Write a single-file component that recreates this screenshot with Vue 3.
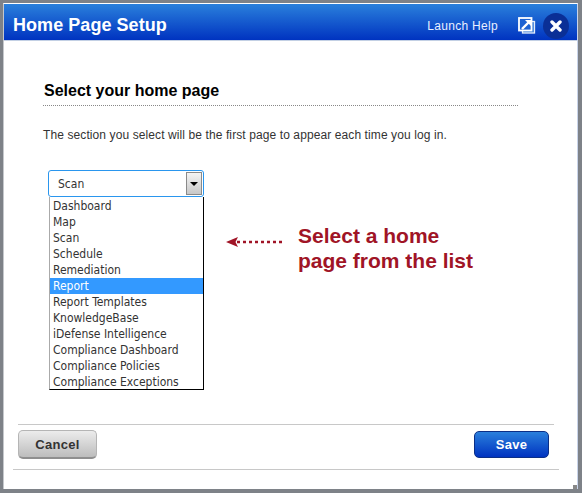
<template>
  <div class="window">
    <header class="title-bar">
      <h1 class="title">Home Page Setup</h1>
      <a class="help-link">Launch Help</a>
      <svg class="popout" width="18" height="17" viewBox="0 0 18 17">
        <rect x="4.500" y="4.500" width="12" height="11.500" fill="#3f7fd8" stroke="#e4edfb" stroke-width="1.300" />
        <rect x="1" y="1" width="12.500" height="12.500" fill="#1d62d2" stroke="#fff" stroke-width="1.800" />
        <path d="M4 12 L10.500 5.500" stroke="#fff" stroke-width="2.400" fill="none" />
        <path d="M7 3 H13.500 V9.500 Z" fill="#fff" />
      </svg>
      <button class="close-btn" type="button">
        <svg width="12" height="12" viewBox="0 0 12 12">
          <path d="M2 2 L10 10 M10 2 L2 10" stroke="#fff" stroke-width="3.400" stroke-linecap="round" />
        </svg>
      </button>
    </header>

    <main class="content">
      <h2 class="section-title">Select your home page</h2>
      <p class="intro">The section you select will be the first page to appear each time you log in.</p>

      <div class="picker-row">
        <div class="picker">
          <div class="select-box">
            <span class="select-value">Scan</span>
            <span class="select-arrow"><i class="caret"></i></span>
          </div>
          <ul class="options">
            <li v-for="page in pages" :key="page" :class="{ active: page === selected }">{{ page }}</li>
          </ul>
        </div>

        <div class="hint">
          <svg class="hint-arrow" width="59" height="12" viewBox="0 0 59 12">
            <path d="M0 6 L12 1 L9.500 6 L12 11 Z" fill="#a01426" />
            <path d="M11 6 H59" stroke="#a01426" stroke-width="2.500" stroke-dasharray="3 3" />
          </svg>
          <p class="hint-text">Select a home<br />page from the list</p>
        </div>
      </div>
    </main>

    <footer class="footer">
      <div class="actions">
        <button class="btn cancel" type="button">Cancel</button>
        <button class="btn save" type="button">Save</button>
      </div>
    </footer>
    <span class="grip"></span>
  </div>
</template>

<script setup>
const selected = 'Report'
const pages = [
  'Dashboard',
  'Map',
  'Scan',
  'Schedule',
  'Remediation',
  'Report',
  'Report Templates',
  'KnowledgeBase',
  'iDefense Intelligence',
  'Compliance Dashboard',
  'Compliance Policies',
  'Compliance Exceptions'
]
</script>

<style>
html,
body {
  margin: 0;
  background: #7e8288;
}
</style>

<style scoped>
.window {
  position: relative;
  box-sizing: border-box;
  width: 575px;
  height: 486px;
  margin: 3px 0 0 3px;
  background: #fff;
  border-top: 1px solid #fff;
  border-left: 1px solid #c5c8cc;
  border-right: 1px solid #c9d4ea;
  font-family: 'Liberation Sans', Arial, sans-serif;
  display: flex;
  flex-direction: column;
}

.title-bar {
  box-sizing: border-box;
  height: 37px;
  flex: none;
  display: flex;
  align-items: center;
  padding: 7px 8px 0 9px;
  background: linear-gradient(#2a80dc, #0033c0);
  border-bottom: 1px solid #c3d0e4;
  color: #fff;
}

.title {
  margin: 0;
  flex: 1;
  font-size: 18px;
  font-weight: bold;
  letter-spacing: 0.05px;
}

.help-link {
  font-size: 12px;
  letter-spacing: 0.3px;
  color: #e8f0ff;
  margin-right: 20px;
}

.popout {
  margin-right: 7px;
}

.close-btn {
  width: 26px;
  height: 26px;
  padding: 0;
  border: none;
  border-radius: 50%;
  background: #0a2f96;
  display: flex;
  align-items: center;
  justify-content: center;
}

.content {
  flex: 1;
  padding: 41px 0 0 39px;
}

.section-title {
  margin: 0 59px 0 0;
  padding-bottom: 5px;
  font-size: 16px;
  line-height: 18px;
  font-weight: bold;
  color: #000;
  border-bottom: 1px dotted #888;
  padding-left: 1px;
}

.intro {
  margin: 22px 0 0;
  font-size: 12px;
  line-height: 14px;
  color: #333;
  letter-spacing: 0.1px;
}

.picker-row {
  display: flex;
  align-items: flex-start;
  margin-top: 28px;
  padding-left: 5px;
}

.picker {
  width: 156px;
  flex: none;
  font-family: 'DejaVu Sans Condensed', 'DejaVu Sans', Tahoma, sans-serif;
  font-size: 12px;
  color: #333;
}

.select-box {
  box-sizing: border-box;
  height: 27px;
  display: flex;
  align-items: stretch;
  border: 1px solid #2a96ee;
  border-radius: 3px;
  padding: 1px;
}

.select-value {
  flex: 1;
  padding-left: 8px;
  line-height: 24px;
}

.select-arrow {
  width: 14px;
  border: 1px solid #8a8a8a;
  background: linear-gradient(#f4f4f4, #c8c8c8);
  display: flex;
  align-items: center;
  justify-content: center;
}

.caret {
  border-left: 4px solid transparent;
  border-right: 4px solid transparent;
  border-top: 4px solid #000;
}

.options {
  list-style: none;
  margin: 0 0 0 1px;
  padding: 1px 0 0;
  box-sizing: border-box;
  width: 155px;
  height: 193px;
  border: 1px solid #000;
  border-top: none;
  border-left: 1px solid #aaa;
}

.options li {
  height: 16px;
  line-height: 16px;
  padding-left: 3px;
  white-space: nowrap;
}

.options li.active {
  background: #3399ff;
  color: #fff;
}

.hint {
  display: flex;
  align-items: flex-start;
  margin: 53px 0 0 22px;
}

.hint-arrow {
  flex: none;
  margin: 13px 13px 0 0;
}

.hint-text {
  margin: 0;
  font-size: 21px;
  line-height: 25px;
  font-weight: bold;
  color: #a01426;
}

.footer {
  flex: none;
  height: 46px;
  margin: 0 18px 19px 9px;
  box-sizing: border-box;
  border-bottom: 1px solid #c8c8c8;
}

.actions {
  margin: 0 5px 0 5px;
  height: 45px;
  box-sizing: border-box;
  border-top: 1px solid #c8c8c8;
  display: flex;
  align-items: center;
  justify-content: space-between;
  padding: 5px 5px 10px 0;
}

.btn {
  font-family: 'Liberation Sans', Arial, sans-serif;
  font-size: 13px;
  font-weight: bold;
  letter-spacing: 0.3px;
  border-radius: 5px;
  padding: 0;
}

.cancel {
  width: 79px;
  height: 29px;
  color: #333;
  background: linear-gradient(#ececec, #bdbdbd);
  border: 1px solid #b5b5b5;
  border-bottom: 2px solid #8f8f8f;
}

.save {
  width: 75px;
  height: 27px;
  color: #fff;
  background: linear-gradient(#2a80dc, #0033c0);
  border: 1px solid #0b2f86;
}

.grip {
  position: absolute;
  right: 0;
  bottom: 0;
  width: 4px;
  height: 4px;
  background: radial-gradient(circle, #888 50%, transparent 55%) 0 0 / 2px 2px;
}
</style>
